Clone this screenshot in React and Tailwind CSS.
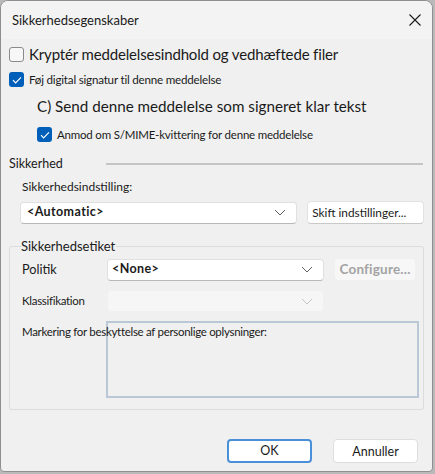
import React from "react";

const font = { fontFamily: 'Lato, "Noto Sans", "Liberation Sans", sans-serif' };

function Chevron({ className = "" }) {
    return (
        <svg className={className} width="12" height="7" viewBox="0 0 12 7" fill="none">
            <path d="M1 1l5 5 5-5" stroke="currentColor" strokeWidth="1" />
        </svg>
    );
}

function Checkbox({ checked }) {
    if (checked) {
        return (
            <span className="w-[15px] h-[15px] rounded-[3px] bg-[#005fb8] flex items-center justify-center shrink-0">
                <svg width="10" height="8" viewBox="0 0 10 8" fill="none">
                    <path d="M1 4.2l2.6 2.6L9 1.3" stroke="white" strokeWidth="1.2" />
                </svg>
            </span>
        );
    }
    return <span className="w-[15px] h-[15px] rounded-[3px] border border-[#8a8a8a] bg-[#f7f7f7] shrink-0" />;
}

function Select({ value, disabled, className = "" }) {
    return (
        <div
            className={`flex items-center justify-between h-[22px] rounded-[4px] pl-[4px] pr-[10px] ${
                disabled
                    ? "bg-[#f6f6f6] border border-[#f0f0f0] text-[#b0b0b0]"
                    : "bg-white border border-[#e0e0e0] border-b-[#b8b8b8] text-[#1a1a1a]"
            } ${className}`}
        >
            <span className="text-[12.5px] font-bold tracking-[0.4px]">{value}</span>
            <Chevron className={disabled ? "text-[#c4c4c4]" : "text-[#5f5f5f]"} />
        </div>
    );
}

export default function App() {
    return (
        <div className="w-[435px] h-[474px] bg-[#b9b9b9] text-[#1a1a1a]" style={font}>
            <div className="w-[433px] h-[472px] bg-[#f0f0f0] border border-[#8f8f8f] rounded-t-[8px] rounded-b-[4px] overflow-hidden flex flex-col">
                {/* Title bar */}
                <div className="h-[38px] bg-[#f3f3f3] flex items-center justify-between pl-[11px] pr-[11px] shrink-0">
                    <span className="text-[13px] leading-none">Sikkerhedsegenskaber</span>
                    <svg width="12" height="12" viewBox="0 0 12 12" fill="none">
                        <path d="M0.5 0.5l11 11M11.5 0.5l-11 11" stroke="#1a1a1a" strokeWidth="1.1" />
                    </svg>
                </div>

                <div className="px-[8px] flex flex-col">
                    <div className="flex items-center gap-[5px] mt-[8px] h-[15px]">
                        <Checkbox />
                        <span className="text-[15px] leading-none tracking-[-0.15px]">Kryptér meddelelsesindhold og vedhæftede filer</span>
                    </div>
                    <div className="flex items-center gap-[5px] mt-[10px] h-[15px]">
                        <Checkbox checked />
                        <span className="text-[11.6px] leading-none tracking-[-0.2px]">Føj digital signatur til denne meddelelse</span>
                    </div>
                    <div className="ml-[28px] mt-[11px] h-[18px] flex items-center text-[15.2px] leading-none">
                        C) Send denne meddelelse som signeret klar tekst
                    </div>
                    <div className="ml-[28px] mt-[11px] flex items-center gap-[5px] h-[15px]">
                        <Checkbox checked />
                        <span className="text-[11.5px] leading-none tracking-[-0.2px]">Anmod om S/MIME-kvittering for denne meddelelse</span>
                    </div>

                    <div className="mt-[14px] h-[16px] flex items-center">
                        <span className="text-[12.5px] leading-none w-[97px]">Sikkerhed</span>
                        <div className="flex-1 h-[2px] bg-[#c4c4c4] mr-[1px] -mt-[1px]" />
                    </div>

                    <div className="ml-[13px] mt-[7px] text-[12px] leading-[16px]">Sikkerhedsindstilling:</div>
                    <div className="ml-[11px] mt-[6px] flex items-center gap-[10px]">
                        <Select value="<Automatic>" className="w-[278px] pl-[6px]" />
                        <button className="h-[23px] w-[117px] rounded-[4px] bg-white border border-[#e2e2e2] border-b-[#c8c8c8] text-[11.8px] text-left pl-[4px] leading-none whitespace-nowrap">
                            Skift indstillinger...
                        </button>
                    </div>

                    <fieldset className="mt-[14px] mr-[6px] border border-[#dcdcdc] rounded-[2px] h-[172px] pl-[12px] pr-[7px]">
                        <legend className="text-[13px] leading-[16px] ml-[-1px] pr-[1px]">Sikkerhedsetiket</legend>
                        <div className="flex items-center mt-[4px]">
                            <span className="w-[85px] text-[12.7px] leading-none">Politik</span>
                            <Select value="<None>" className="w-[217px]" />
                            <button className="ml-[10px] h-[23px] w-[82px] rounded-[4px] bg-[#f7f7f7] border border-[#f0f0f0] text-[13.5px] font-bold tracking-[0.2px] text-[#a3a3a3] leading-none whitespace-nowrap" disabled>
                                Configure...
                            </button>
                        </div>
                        <div className="flex items-center mt-[9px]">
                            <span className="w-[85px] text-[11.5px] leading-none tracking-[-0.3px]">Klassifikation</span>
                            <Select value="" disabled className="w-[217px]" />
                        </div>
                        <div className="relative mt-[9px] h-[77px]">
                            <div className="absolute left-[84px] top-0 w-[313px] h-[77px] border-2 border-[#b9c7d6] bg-[#f0f0f0]" />
                            <span className="absolute left-0 top-[5px] text-[11.5px] leading-none tracking-[-0.3px] whitespace-nowrap">
                                Markering for beskyttelse af personlige oplysninger:
                            </span>
                        </div>
                    </fieldset>

                    <div className="flex justify-end gap-[21px] mt-[29px] mr-[6px]">
                        <button className="w-[85px] h-[24px] rounded-[4px] bg-white border-2 border-[#4a90d9] text-[12.5px] leading-none">OK</button>
                        <button className="w-[85px] h-[24px] rounded-[4px] bg-white border border-[#dedede] text-[12.5px] leading-none pt-[3px]">Annuller</button>
                    </div>
                </div>
            </div>
        </div>
    );
}
